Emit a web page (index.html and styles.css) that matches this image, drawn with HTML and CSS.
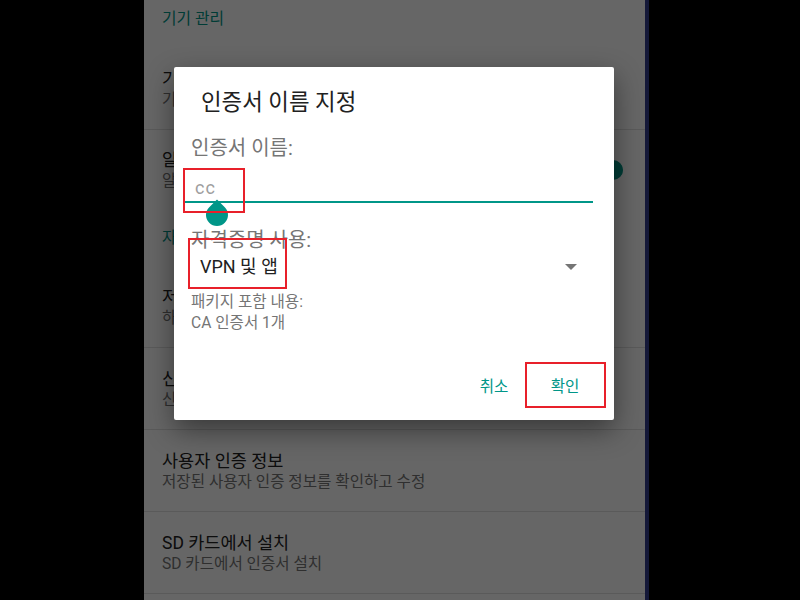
FILE: index.html
```html
<!DOCTYPE html>
<html lang="ko">
  <head>
    <meta charset="UTF-8" />
    <title>인증서 이름 지정</title>
    <link rel="stylesheet" href="styles.css">
  </head>
  <body>
    <div class="device">
      <div class="screen">
        <!-- 설정 목록 (대화상자 뒤) -->
        <div class="category first">기기 관리</div>
        <div class="row">
          <div class="row-text">
            <div class="row-title">기기 관리자</div>
            <div class="row-sub">기기 관리자 보기 또는 비활성화</div>
          </div>
        </div>
        <div class="row no-line">
          <div class="row-text">
            <div class="row-title">알 수 없는 출처</div>
            <div class="row-sub">알 수 없는 출처의 앱 설치 허용</div>
          </div>
          <div class="switch"><div class="thumb"></div></div>
        </div>
        <div class="category">자격증명 저장소</div>
        <div class="row">
          <div class="row-text">
            <div class="row-title">저장소 유형</div>
            <div class="row-sub">하드웨어 지원</div>
          </div>
        </div>
        <div class="row">
          <div class="row-text">
            <div class="row-title">신뢰할 수 있는 자격증명</div>
            <div class="row-sub">신뢰할 수 있는 CA 인증서 표시</div>
          </div>
        </div>
        <div class="row">
          <div class="row-text">
            <div class="row-title">사용자 인증 정보</div>
            <div class="row-sub">저장된 사용자 인증 정보를 확인하고 수정</div>
          </div>
        </div>
        <div class="row">
          <div class="row-text">
            <div class="row-title">SD 카드에서 설치</div>
            <div class="row-sub">SD 카드에서 인증서 설치</div>
          </div>
        </div>

        <div class="scrim"></div>

        <!-- 대화상자 -->
        <div class="dialog">
          <div class="dialog-title">인증서 이름 지정</div>
          <div class="field-label">인증서 이름:</div>
          <div class="name-input">
            cc
            <div class="handle"></div>
          </div>
          <div class="field-label second">자격증명 사용:</div>
          <div class="spinner">
            <span>VPN 및 앱</span>
            <span class="arrow"></span>
          </div>
          <div class="package">
            <div>패키지 포함 내용:</div>
            <div>CA 인증서 1개</div>
          </div>
          <div class="actions">
            <button class="btn">취소</button>
            <button class="btn">확인</button>
          </div>

          <div class="mark mark-name"></div>
          <div class="mark mark-use"></div>
          <div class="mark mark-ok"></div>
        </div>
      </div>
    </div>
  </body>
</html>
```

FILE: styles.css
```css
body {
  margin: 0;
  background: #000;
  font-family: Roboto, "Noto Sans CJK KR", sans-serif;
}

.device {
  width: 800px;
  height: 600px;
  overflow: hidden;
}

.screen {
  position: relative;
  margin-left: 144px;
  width: 501px;
  height: 600px;
  background: #fff;
  border-right: 4px solid #141838;
  overflow: hidden;
}

/* 설정 목록 */
.category {
  padding: 18px 18px;
  font-size: 15.8px;
  line-height: 20px;
  color: #009688;
}

.category.first {
  padding: 9px 18px 19px;
}

.row {
  display: flex;
  align-items: center;
  padding: 20px 22px 19px 18px;
  border-bottom: 1px solid #e0e0e0;
}

.row.no-line {
  border-bottom: none;
  padding-top: 19px;
}

.row-text {
  flex: 1;
}

.row-title {
  font-size: 17.5px;
  line-height: 22px;
  color: #212121;
}

.row-sub {
  font-size: 15.6px;
  line-height: 20px;
  color: #757575;
}

.switch {
  position: relative;
  width: 34px;
  height: 14px;
  border-radius: 7px;
  background: #80cbc4;
}

.switch .thumb {
  position: absolute;
  right: 0;
  top: -3px;
  width: 20px;
  height: 20px;
  border-radius: 50%;
  background: #009688;
}

.scrim {
  position: absolute;
  inset: 0;
  background: rgba(0, 0, 0, 0.6);
}

/* 대화상자 */
.dialog {
  position: absolute;
  left: 30px;
  top: 67px;
  width: 440px;
  height: 353px;
  box-sizing: border-box;
  display: flex;
  flex-direction: column;
  background: #fff;
  border-radius: 2px;
  box-shadow: 0 10px 28px rgba(0, 0, 0, 0.45);
}

.dialog-title {
  padding: 21px 27px 0;
  font-size: 22.4px;
  line-height: 28px;
  color: #212121;
}

.field-label {
  margin-top: 19px;
  padding-left: 17px;
  font-size: 20px;
  line-height: 26px;
  color: #757575;
}

.field-label.second {
  margin-top: 24px;
}

.name-input {
  position: relative;
  margin: 16px 21px 0 11px;
  padding: 0 0 2px 10px;
  font-size: 18px;
  letter-spacing: 1px;
  line-height: 22px;
  color: #9e9e9e;
  border-bottom: 2px solid #009688;
}

.handle {
  position: absolute;
  left: 21px;
  top: 27px;
  width: 22px;
  height: 22px;
  background: #009688;
  border-radius: 0 50% 50% 50%;
  transform: rotate(45deg);
}

.spinner {
  display: flex;
  align-items: center;
  justify-content: space-between;
  margin-top: 2px;
  padding: 0 37px 0 26px;
  font-size: 18px;
  line-height: 24px;
  color: #212121;
}

.arrow {
  width: 0;
  height: 0;
  border-left: 6px solid transparent;
  border-right: 6px solid transparent;
  border-top: 6px solid #757575;
}

.package {
  margin-top: 13px;
  padding-left: 17px;
  font-size: 15.6px;
  line-height: 21px;
  color: #757575;
}

.actions {
  display: flex;
  justify-content: flex-end;
  gap: 7px;
  margin-top: auto;
  padding: 0 17px 17px;
}

.btn {
  width: 64px;
  height: 36px;
  padding: 0;
  border: none;
  background: none;
  font-family: inherit;
  font-size: 15.6px;
  color: #009688;
}

/* 빨간 표시 상자 */
.mark {
  position: absolute;
  box-sizing: border-box;
  border: 2px solid #e8202a;
}

.mark-name {
  left: 9px;
  top: 101px;
  width: 62px;
  height: 45px;
}

.mark-use {
  left: 14px;
  top: 171px;
  width: 99px;
  height: 51px;
}

.mark-ok {
  left: 351px;
  top: 295px;
  width: 81px;
  height: 46px;
}
```
